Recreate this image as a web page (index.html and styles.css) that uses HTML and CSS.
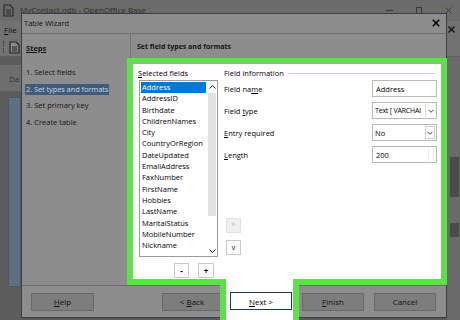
FILE: index.html
```html
<!DOCTYPE html>
<html lang="en">
<head>
  <meta charset="UTF-8">
  <title>Table Wizard</title>
  <link rel="stylesheet" href="styles.css">
</head>
<body>
  <div class="app">
    <div class="app-title">
      <svg class="app-icon" width="11" height="13" viewBox="0 0 11 13">
        <path d="M1 1h6l3 3v8H1z" fill="none" stroke="#2a2a2a" stroke-width="1.2"/>
        <path d="M3 6h5M3 8h5M3 10h5" stroke="#2a2a2a" stroke-width="1"/>
      </svg>
      <span class="app-name">MyContact.odb - OpenOffice Base</span>
      <div class="win-ctls">
        <span class="ctl-min"></span>
        <span class="ctl-max"></span>
        <svg width="7" height="7" viewBox="0 0 7 7"><path d="M0.5 0.5l6 6M6.5 0.5l-6 6" stroke="#3a3a3a" stroke-width="1"/></svg>
      </div>
    </div>
    <div class="menubar">
      <span class="menu-item"><u>F</u>ile</span>
      <svg class="doc-close" width="7" height="7" viewBox="0 0 7 7"><path d="M0.5 0.5l6 6M6.5 0.5l-6 6" stroke="#111" stroke-width="1.4"/></svg>
    </div>
    <div class="toolbar">
      <span class="grip"></span>
      <svg width="11" height="13" viewBox="0 0 11 13">
        <path d="M1 1h6l3 3v8H1z" fill="#8a8a8a" stroke="#222" stroke-width="1.2"/>
        <path d="M3 6h5M3 8h5M3 10h5" stroke="#222" stroke-width="1"/>
      </svg>
    </div>
    <div class="workspace">
      <div class="side">
        <div class="side-tab">Da</div>
        <div class="side-box"></div>
      </div>
      <div class="work-main"></div>
      <div class="right-strip">
        <div class="strip-block"></div>
        <div class="strip-block low"></div>
      </div>
    </div>
  </div>

  <div class="dialog">
    <div class="dlg-title">
      <span>Table Wizard</span>
      <svg width="8" height="8" viewBox="0 0 8 8"><path d="M0.8 0.8l6.4 6.4M7.2 0.8l-6.4 6.4" stroke="#000" stroke-width="1.5"/></svg>
    </div>
    <div class="dlg-body">
      <div class="steps">
        <div class="steps-head">Steps</div>
        <ul class="step-list">
          <li>1. Select fields</li>
          <li><span class="step-current">2. Set types and formats</span></li>
          <li>3. Set primary key</li>
          <li>4. Create table</li>
        </ul>
      </div>
      <div class="page">
        <div class="page-head">Set field types and formats</div>
        <div class="panel">
          <div class="fields-col">
            <div class="label"><u>S</u>elected fields</div>
            <div class="listbox">
              <ul class="list-items">
                <li class="selected">Address</li>
                <li>AddressID</li>
                <li>Birthdate</li>
                <li>ChildrenNames</li>
                <li>City</li>
                <li>CountryOrRegion</li>
                <li>DateUpdated</li>
                <li>EmailAddress</li>
                <li>FaxNumber</li>
                <li>FirstName</li>
                <li>Hobbies</li>
                <li>LastName</li>
                <li>MaritalStatus</li>
                <li>MobileNumber</li>
                <li>Nickname</li>
              </ul>
              <div class="vscroll">
                <div class="scroll-btn">
                  <svg width="7" height="4" viewBox="0 0 7 4"><path d="M0.5 3.5l3-3 3 3" fill="none" stroke="#222" stroke-width="1"/></svg>
                </div>
                <div class="scroll-track"><div class="scroll-thumb"></div></div>
                <div class="scroll-btn">
                  <svg width="7" height="4" viewBox="0 0 7 4"><path d="M0.5 0.5l3 3 3-3" fill="none" stroke="#222" stroke-width="1"/></svg>
                </div>
              </div>
            </div>
            <div class="pm">
              <button class="small-btn minus">-</button>
              <button class="small-btn plus">+</button>
            </div>
          </div>
          <div class="info-col">
            <div class="group-title">Field information</div>
            <div class="row">
              <span>Field na<u>m</u>e</span>
              <div class="input">Address</div>
            </div>
            <div class="row">
              <span>Field <u>t</u>ype</span>
              <div class="input select">
                <span class="val narrow">Text [ VARCHAI</span>
                <span class="drop"><svg width="6" height="4" viewBox="0 0 6 4"><path d="M0.5 0.8l2.5 2.5 2.5-2.5" fill="none" stroke="#333" stroke-width="0.9"/></svg></span>
              </div>
            </div>
            <div class="row">
              <span><u>E</u>ntry required</span>
              <div class="input select">
                <span class="val">No</span>
                <span class="drop boxed"><svg width="6" height="4" viewBox="0 0 6 4"><path d="M0.5 0.8l2.5 2.5 2.5-2.5" fill="none" stroke="#333" stroke-width="0.9"/></svg></span>
              </div>
            </div>
            <div class="row">
              <span><u>L</u>ength</span>
              <div class="input spin">
                <span class="val">200</span>
                <span class="spin-part"></span>
              </div>
            </div>
            <div class="arrows">
              <button class="small-btn move disabled">^</button>
              <button class="small-btn move">v</button>
            </div>
          </div>
        </div>
      </div>
    </div>
    <div class="dlg-foot">
      <button class="btn"><u>H</u>elp</button>
      <span class="grow"></span>
      <button class="btn">&lt; <u>B</u>ack</button>
      <div class="spot">
        <button class="btn btn-next"><u>N</u>ext &gt;</button>
      </div>
      <button class="btn"><u>F</u>inish</button>
      <button class="btn btn-cancel">Cancel</button>
    </div>
  </div>
</body>
</html>
```

FILE: styles.css
```css
* { box-sizing: border-box; }
body { margin: 0; width: 460px; height: 320px; overflow: hidden; position: relative; background: #5a5a5a; font-family: "Open Sans", "Noto Sans", sans-serif; font-size: 7.5px; color: #141414; }
u { text-decoration: underline; text-underline-offset: 1px; }
ul { list-style: none; margin: 0; padding: 0; }
button { font: inherit; color: inherit; margin: 0; padding: 0; cursor: default; }

/* app behind the dialog */
.app { height: 320px; display: flex; flex-direction: column; }
.app-title { height: 21px; background: #6b6b6b; display: flex; align-items: flex-start; padding: 4px 8px 0 3px; gap: 6px; color: #2e2e2e; font-size: 8px; }
.app-name { line-height: 12px; }
.win-ctls { margin-left: auto; display: flex; align-items: center; gap: 23px; height: 12px; }
.ctl-min { width: 7px; height: 1px; background: #3a3a3a; }
.ctl-max { width: 6px; height: 7px; border: 1px solid #3a3a3a; }
.menubar { height: 17px; background: #727272; display: flex; align-items: center; padding: 0 5px 0 4px; font-size: 8px; }
.menu-item { color: #111; }
.doc-close { margin-left: auto; }
.toolbar { height: 19px; background: #727272; display: flex; align-items: center; gap: 5px; padding-left: 3px; border-bottom: 1px solid #606060; }
.grip { width: 1px; height: 12px; border-left: 1px dotted #333; }
.workspace { flex: 1; display: flex; }
.side { width: 21px; background: #5c5c5c; padding-top: 8px; }
.side-tab { height: 26px; background: #6e6e6e; color: #2f2f2f; padding: 8px 0 0 9px; font-size: 8px; }
.side-box { margin: 6px 0 0 8px; height: 190px; background: #5e6f82; border: 1px solid #4b5866; }
.work-main { flex: 1; }
.right-strip { width: 13px; background: #6a6a6a; padding: 40px 1px 0 3px; }
.strip-block { height: 40px; background: #4a4a4a; margin-top: 60px; }
.strip-block.low { height: 14px; margin-top: 26px; }

/* dialog */
.dialog { position: absolute; left: 21px; top: 13px; width: 426px; height: 305px; border: 1px solid #34404c; background: #8d8d8d; display: flex; flex-direction: column; }
.dlg-title { height: 20px; display: flex; align-items: center; justify-content: space-between; padding: 0 6px 2px 2px; border-bottom: 1px solid #6e6e6e; font-size: 7.5px; color: #111; }
.dlg-body { flex: 1; display: flex; min-height: 0; }
.steps { width: 109px; border-right: 1px solid #747474; padding: 8px 0 0 4px; }
.steps-head { font-weight: bold; text-decoration: underline; font-size: 7.5px; line-height: 12px; }
.step-list { margin-top: 10px; }
.step-list li { line-height: 16.5px; white-space: nowrap; }
.step-current { display: inline-block; background: #3e5b7b; color: #cfd6de; line-height: 11px; padding: 0 1px 0 1px; margin-left: -1px; letter-spacing: -0.1px; }

.page { flex: 1; display: flex; flex-direction: column; min-width: 0; }
.page-head { height: 24px; padding: 2px 0 0 6px; font-weight: bold; font-size: 7px; line-height: 22px; }
.panel { flex: 1; margin: 0 -1px 0 -4px; border: 6px solid #5ee04b; background: #fff; display: flex; color: #000; }

.fields-col { width: 86px; padding: 4px 0 0 5px; display: flex; flex-direction: column; }
.label { line-height: 10px; }
.listbox { margin: 2px 0 0 1px; width: 79px; height: 177px; border: 1px solid #9c9c9c; display: flex; }
.list-items { flex: 1; padding: 1px 1px 0 1px; overflow: hidden; }
.list-items li { line-height: 11.3px; padding-left: 1px; white-space: nowrap; }
.list-items .selected { background: #0078d7; color: #fff; }
.vscroll { width: 10px; display: flex; flex-direction: column; }
.scroll-btn { height: 11px; display: flex; align-items: center; justify-content: center; }
.scroll-track { flex: 1; padding-top: 1px; }
.scroll-thumb { height: 123px; margin: 0 1px; background: #e2e2e2; }
.pm { margin-top: 6px; display: flex; justify-content: flex-end; gap: 9px; padding-right: 5px; }
.small-btn { height: 15px; background: #fdfdfd; border: 1px solid #c9c9c9; font-size: 8px; font-weight: bold; line-height: 12px; }
.minus { width: 15px; }
.plus { width: 16px; }

.info-col { flex: 1; padding: 4px 4px 0 5px; display: flex; flex-direction: column; }
.group-title { line-height: 10px; display: flex; align-items: center; gap: 4px; }
.group-title::after { content: ""; flex: 1; height: 1px; background: #d2d2d2; margin-right: 2px; }
.row { height: 17px; margin-top: 5px; display: flex; align-items: center; }
.group-title + .row { margin-top: 2px; }
.input { margin-left: auto; width: 65px; height: 17px; border: 1px solid #b9b9b9; padding-left: 3px; display: flex; align-items: center; white-space: nowrap; }
.select { padding-left: 2px; }
.select .val { flex: 1; }
.val.narrow { font-size: 7px; letter-spacing: -0.2px; }
.drop { width: 10px; height: 13px; margin-right: 1px; display: flex; align-items: center; justify-content: center; border-left: 1px solid #e0e0e0; }
.drop.boxed { border: 1px solid #cfcfcf; }
.spin .val { flex: 1; }
.spin-part { width: 6px; height: 13px; margin-right: 2px; border-left: 1px solid #ececec; border-right: 1px solid #ececec; }
.arrows { margin: 55px 0 0 2px; display: flex; flex-direction: column; gap: 7px; }
.move { width: 15px; font-weight: normal; font-size: 7px; }
.move.disabled { background: #efefef; border-color: #e4e4e4; color: #b0b0b0; }

/* footer buttons */
.dlg-foot { height: 32px; border-top: 1px solid #6c6c6c; display: flex; align-items: center; padding: 0 10px 0 9px; }
.grow { flex: 1; }
.btn { width: 60px; height: 18px; background: #7d7d7d; border: 1px solid #686868; font-size: 8px; color: #111; }
.dlg-foot > .btn:first-child { width: 63px; }
.dlg-foot > .btn:nth-last-child(-n+2) { width: 62px; }
.btn-cancel { margin-left: 10px; }
.spot { align-self: stretch; position: relative; z-index: 1; width: 79px; margin: -7px 3px -3px -2px; padding: 13px 0 0 4px; background: #fff; border-left: 6px solid #5ee04b; border-right: 6px solid #5ee04b; }
.spot .btn-next { width: 62px; background: #fff; border: 1px solid #1d3957; color: #000; }
```
